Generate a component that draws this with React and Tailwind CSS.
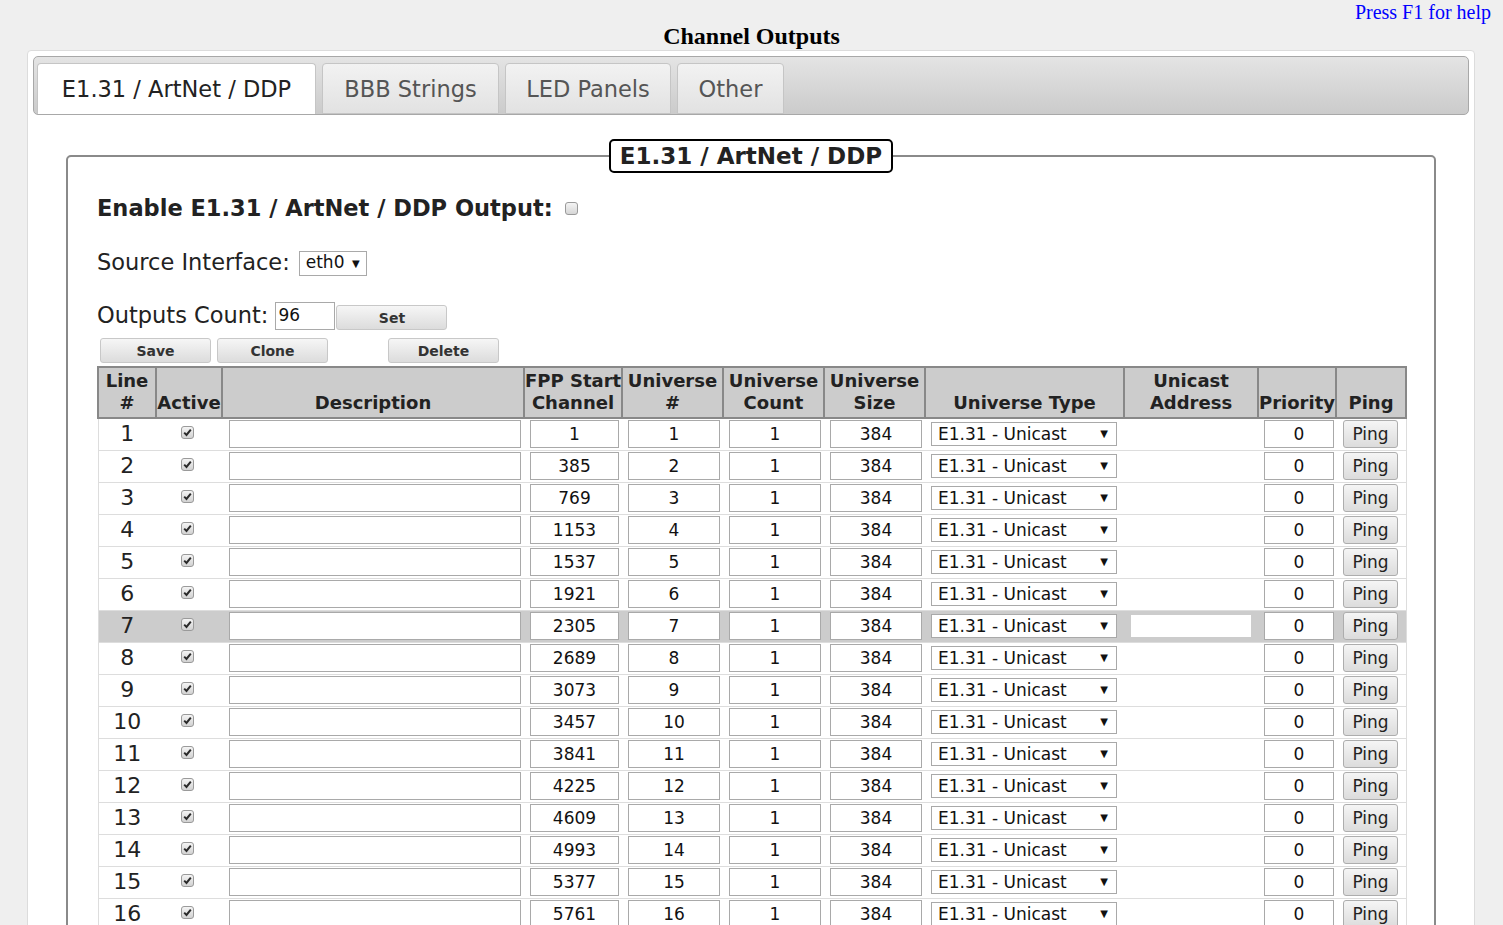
import React from 'react';

const FONT = { fontFamily: '"DejaVu Sans", Verdana, sans-serif' };
const SERIF = { fontFamily: '"Liberation Serif", "Times New Roman", serif' };

const COLS = [58, 66, 302, 98, 101, 101, 101, 199, 134, 78, 70];

const HEADERS = [
  ['Line', '#'],
  ['', 'Active'],
  ['', 'Description'],
  ['FPP Start', 'Channel'],
  ['Universe', '#'],
  ['Universe', 'Count'],
  ['Universe', 'Size'],
  ['', 'Universe Type'],
  ['Unicast', 'Address'],
  ['', 'Priority'],
  ['', 'Ping'],
];

const rows = Array.from({ length: 17 }, (_, i) => ({
  line: i + 1,
  start: 1 + i * 384,
  universe: i + 1,
}));

function Tab({ label, active, width }) {
  return (
    <div
      className={
        active
          ? 'h-[51px] pt-[2px] flex items-center justify-center bg-white border border-b-0 border-[#c5c5c5] rounded-t-[4px] text-[22.5px] text-[#222]'
          : 'h-[51px] pt-[2px] flex items-center justify-center bg-gradient-to-b from-[#f2f2f2] to-[#e2e2e2] border border-[#c5c5c5] rounded-t-[4px] text-[22.5px] text-[#555]'
      }
      style={{ width }}
    >
      {label}
    </div>
  );
}

function GrayButton({ children, className = '' }) {
  return (
    <button
      className={
        'h-[25px] w-[111px] rounded-[3px] border border-[#c8c8c8] bg-gradient-to-b from-[#f6f6f6] to-[#dcdcdc] text-[14px] font-bold text-[#333] leading-none ' +
        className
      }
      style={FONT}
    >
      {children}
    </button>
  );
}

function CheckBox({ checked }) {
  return (
    <span className="inline-flex w-[13px] h-[13px] items-center justify-center rounded-[3px] border border-[#9a9a9a] bg-gradient-to-b from-[#f4f4f4] to-[#d2d2d2]">
      {checked && (
        <svg width="9" height="9" viewBox="0 0 9 9">
          <path d="M1.2 4.6 L3.5 6.9 L7.8 1.6" fill="none" stroke="#2a2a2a" strokeWidth="2" />
        </svg>
      )}
    </span>
  );
}

function NumInput({ value }) {
  return (
    <div className="h-[28px] w-full border border-[#a9a9a9] bg-white flex items-center justify-center text-[17px] text-[#111]">
      {value}
    </div>
  );
}

function Row({ r, highlight }) {
  const td = 'p-0 border-b border-[#ddd] align-middle leading-none';
  return (
    <tr className={highlight ? 'h-[32px] bg-[#cccccc]' : 'h-[32px] bg-white'}>
      <td className={td + ' border-l text-center text-[22px] text-[#222]'}>{r.line}</td>
      <td className={td + ' text-center'}>
        <div className="flex justify-center pb-[4px] pr-[3px]">
          <CheckBox checked />
        </div>
      </td>
      <td className={td}>
        <div className="pl-[7px] pr-[3px]">
          <div className="h-[28px] w-full border border-[#a9a9a9] bg-white" />
        </div>
      </td>
      <td className={td}>
        <div className="pl-[6px] pr-[3px]">
          <NumInput value={r.start} />
        </div>
      </td>
      <td className={td}>
        <div className="pl-[6px] pr-[3px]">
          <NumInput value={r.universe} />
        </div>
      </td>
      <td className={td}>
        <div className="pl-[6px] pr-[3px]">
          <NumInput value={1} />
        </div>
      </td>
      <td className={td}>
        <div className="pl-[6px] pr-[3px]">
          <NumInput value={384} />
        </div>
      </td>
      <td className={td}>
        <div className="pl-[6px]">
          <div className="h-[24px] w-[186px] border border-[#a9a9a9] bg-white flex items-center justify-between pl-[6px] pr-[8px] text-[17px] text-[#111]">
            <span>E1.31 - Unicast</span>
            <span className="text-[10px]">▼</span>
          </div>
        </div>
      </td>
      <td className={td}>
        {highlight && (
          <div className="pl-[7px]">
            <div className="h-[22px] w-[120px] bg-white" />
          </div>
        )}
      </td>
      <td className={td}>
        <div className="pl-[6px] pr-[2px]">
          <NumInput value={0} />
        </div>
      </td>
      <td className={td + ' border-r'}>
        <div className="pl-[7px]">
          <button
            className="h-[28px] w-[55px] rounded-[3px] border border-[#adadad] bg-gradient-to-b from-[#f5f5f5] to-[#dcdcdc] text-[17px] text-[#222] leading-none"
            style={FONT}
          >
            Ping
          </button>
        </div>
      </td>
    </tr>
  );
}

export default function App() {
  return (
    <div className="h-screen overflow-hidden bg-[#efefef] text-[#222]" style={FONT}>
      {/* page header */}
      <div className="h-[22px] pt-[1px] pr-[12px] text-right text-[20px] leading-[22px] text-[#0000ff]" style={SERIF}>
        Press F1 for help
      </div>
      <div className="h-[28px] text-center text-[24px] leading-[28px] font-bold text-black" style={SERIF}>
        Channel Outputs
      </div>

      <div className="ml-[27px] w-[1448px] bg-white border border-[#dcdcdc] rounded-[4px] p-[5px] pb-0">
        {/* tabs */}
        <div className="h-[59px] rounded-[5px] border border-[#a8a8a8] bg-gradient-to-b from-[#e4e4e4] to-[#cbcbcb] flex items-end gap-[6px] pl-[3px]">
          <Tab label="E1.31 / ArtNet / DDP" active width={279} />
          <Tab label="BBB Strings" width={177} />
          <Tab label="LED Panels" width={166} />
          <Tab label="Other" width={107} />
        </div>

        <div className="px-[33px] pt-[24px]">
          <fieldset className="border-2 border-[#8a8a8a] rounded-[5px] px-[29px] pb-[40px] min-w-0">
            <legend className="mx-auto border-2 border-black rounded-[5px] px-[9px] h-[34px] text-[23px] font-bold leading-[30px] text-[#222]">
              E1.31 / ArtNet / DDP
            </legend>

            <div className="mt-[22px] h-[28px] flex items-center gap-[12px]">
              <span className="text-[22.5px] font-bold text-[#222]">Enable E1.31 / ArtNet / DDP Output:</span>
              <span className="mb-[2px] inline-block w-[13px] h-[13px] rounded-[3px] border border-[#9a9a9a] bg-gradient-to-b from-[#f4f4f4] to-[#d6d6d6]" />
            </div>

            <div className="mt-[26px] h-[28px] flex items-center gap-[9px]">
              <span className="text-[22.5px] text-[#222]">Source Interface:</span>
              <div className="h-[25px] w-[68px] border border-[#a9a9a9] bg-white flex items-center justify-between pl-[6px] pr-[6px] text-[17px] text-[#111]">
                <span>eth0</span>
                <span className="text-[10px]">▼</span>
              </div>
            </div>

            <div className="mt-[25px] h-[28px] flex items-center">
              <span className="text-[22.5px] text-[#222]">Outputs Count:</span>
              <div className="ml-[7px] h-[28px] w-[60px] border border-[#a9a9a9] bg-white flex items-center pl-[2px] text-[17px] text-[#111]">
                96
              </div>
              <GrayButton className="ml-[1px] mt-[3px]">Set</GrayButton>
            </div>

            <div className="mt-[8px] flex gap-[6px] pl-[3px]">
              <GrayButton>Save</GrayButton>
              <GrayButton>Clone</GrayButton>
              <GrayButton className="ml-[54px]">Delete</GrayButton>
            </div>

            <table className="mt-[3px] w-[1308px] table-fixed border-collapse">
              <colgroup>
                {COLS.map((w, i) => (
                  <col key={i} style={{ width: w }} />
                ))}
              </colgroup>
              <thead>
                <tr>
                  {HEADERS.map((h, i) => (
                    <th
                      key={i}
                      className="border-2 border-[#888] bg-[#cccccc] align-bottom text-center text-[18px] font-bold leading-[22px] text-[#222] p-0 pt-[2px] pb-[3px] whitespace-nowrap"
                    >
                      <div>{h[0] || '\u00a0'}</div>
                      <div>{h[1]}</div>
                    </th>
                  ))}
                </tr>
              </thead>
              <tbody>
                {rows.map((r) => (
                  <Row key={r.line} r={r} highlight={r.line === 7} />
                ))}
              </tbody>
            </table>
          </fieldset>
        </div>
      </div>
    </div>
  );
}
